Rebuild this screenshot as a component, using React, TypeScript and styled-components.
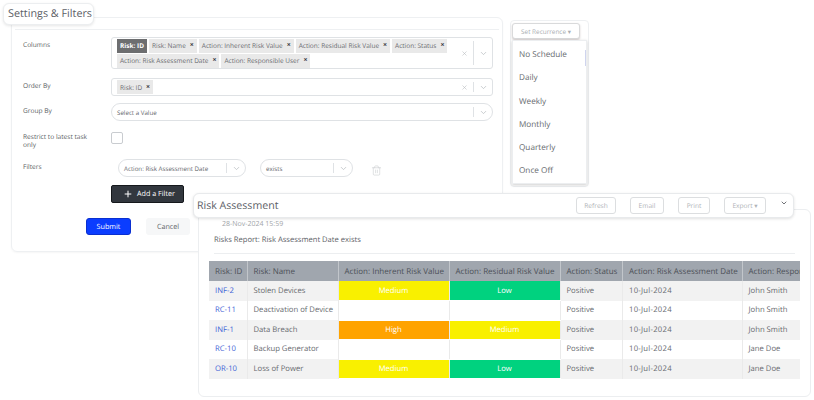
import React from 'react'
import styled, { createGlobalStyle } from 'styled-components'
import { ChevronDown, Plus, Trash2, X } from 'lucide-react'

const GlobalStyle = createGlobalStyle`
  html, body {
    margin: 0;
    width: 814px;
    height: 400px;
    overflow: hidden;
    background: #ffffff;
    font-family: "Open Sans", "Liberation Sans", sans-serif;
    color: #5c6066;
    text-rendering: geometricPrecision;
  }
  button {
    text-rendering: geometricPrecision;
  }
`

const Canvas = styled.div`
  position: relative;
  width: 814px;
  height: 400px;
  overflow: hidden;
`

const SettingsCard = styled.section`
  position: absolute;
  left: 11px;
  top: 17px;
  width: 492px;
  height: 235px;
  box-sizing: border-box;
  padding: 11px 3px 0;
  border: 1px solid #eef0f2;
  border-radius: 6px;
  box-shadow: 0 1px 2px rgba(0, 0, 0, 0.04);
`

const SettingsTitle = styled.h2`
  position: absolute;
  left: 3px;
  top: 3px;
  z-index: 1;
  margin: 0;
  height: 22px;
  width: 91px;
  box-sizing: border-box;
  padding-left: 4px;
  border: 1px solid #eceef0;
  border-radius: 6px;
  background: #fff;
  font-size: 10.8px;
  font-weight: 400;
  line-height: 20px;
  white-space: nowrap;
  color: #5c6066;
  box-shadow: 0 1px 3px rgba(0, 0, 0, 0.1);
`

const FormArea = styled.div`
  border-top: 1px solid #eef0f2;
  padding: 7px 6px 0 8px;
  display: flex;
  flex-direction: column;
`

const FormRow = styled.div<{ $height: number }>`
  display: grid;
  grid-template-columns: 88px 1fr;
  height: ${({ $height }) => $height}px;
`

const FieldLabel = styled.label<{ $tight?: boolean }>`
  font-size: 6.6px;
  font-weight: 400;
  line-height: 8px;
  padding-top: ${({ $tight }) => ($tight ? 1 : 4)}px;
  color: #5a5e63;
`

const SelectBox = styled.div<{ $round?: boolean; $width?: number; $height?: number }>`
  display: flex;
  align-items: center;
  box-sizing: border-box;
  width: ${({ $width }) => ($width ? `${$width}px` : '100%')};
  height: ${({ $height }) => $height ?? 18}px;
  border: 1px solid #dfe2e5;
  border-radius: ${({ $round }) => ($round ? '10px' : '3px')};
  padding: 1px 0 1px 5px;
  background: #fff;
`

const TagWrap = styled.div`
  flex: 1;
  display: flex;
  flex-wrap: wrap;
  gap: 1px 2px;
`

const Tag = styled.span<{ $active?: boolean }>`
  display: inline-flex;
  align-items: center;
  gap: 4px;
  height: 14px;
  padding: 0 3px;
  font-size: 6.5px;
  white-space: nowrap;
  font-weight: ${({ $active }) => ($active ? 700 : 400)};
  background: ${({ $active }) => ($active ? '#6d6e70' : '#e9e9e9')};
  color: ${({ $active }) => ($active ? '#ffffff' : '#696c70')};
`

const TagClose = styled.span`
  font-size: 7px;
  font-weight: 700;
  color: #33363a;
`

const Placeholder = styled.span`
  flex: 1;
  font-size: 6.2px;
  white-space: nowrap;
  color: #66696e;
`

const SelectActions = styled.div`
  display: flex;
  align-items: center;
  color: #b8bcc0;
`

const ActionDivider = styled.span<{ $tall?: boolean }>`
  display: block;
  width: 1px;
  height: ${({ $tall }) => ($tall ? 24 : 10)}px;
  margin: 0 5px;
  background: #dfe2e5;
`

const SelectChevron = styled(ChevronDown)`
  margin-right: 4px;
`

const CheckBox = styled.span`
  display: block;
  width: 12px;
  height: 12px;
  box-sizing: border-box;
  border: 1px solid #c9ccd0;
  border-radius: 2px;
`

const FilterRow = styled.div`
  display: flex;
  align-items: flex-start;
  gap: 14px;
  padding-left: 7px;
`

const TrashButton = styled.span`
  margin: 0 0 0 4px;
  color: #c6c9cc;
`

const AddButton = styled.button`
  display: flex;
  align-items: center;
  justify-content: center;
  gap: 4px;
  width: 73px;
  height: 18px;
  padding: 0 0 0 3px;
  border: 1px solid #15181c;
  border-radius: 2px;
  background: #32373e;
  color: #fff;
  font: 400 7.2px "Open Sans", sans-serif;
`

const FormFooter = styled.div`
  display: flex;
  gap: 15px;
  margin: 15px 0 0 63px;
`

const SubmitButton = styled.button`
  width: 45px;
  height: 17px;
  padding: 0;
  border: 1px solid #0a2fd0;
  border-radius: 3px;
  background: #0b3dff;
  color: #fff;
  font: 400 7.2px "Open Sans", sans-serif;
`

const CancelButton = styled.button`
  width: 44px;
  height: 17px;
  padding: 0;
  border: 0;
  border-radius: 3px;
  background: #f6f7f8;
  color: #63666b;
  font: 400 7.2px "Open Sans", sans-serif;
`

const RecurrencePanel = styled.aside`
  position: absolute;
  left: 510px;
  top: 20px;
  width: 79px;
  height: 167px;
  box-sizing: border-box;
  padding: 2px 1px 0 1px;
  border: 1px solid #eef0f2;
  border-radius: 4px;
`

const RecurrenceButton = styled.button`
  display: block;
  width: 68px;
  height: 16px;
  margin-bottom: 1px;
  padding: 0;
  border: 1px solid #d9dadb;
  border-radius: 3px;
  background: #fff;
  color: #a9adb1;
  font: 400 6.4px "Open Sans", sans-serif;
  box-shadow: 0 1px 2px rgba(80, 50, 50, 0.25);
`

const RecurrenceMenu = styled.ul`
  position: relative;
  list-style: none;
  margin: 0;
  padding: 2px 0 0;
  height: 144px;
  box-sizing: border-box;
  background: #fff;
  border: 1px solid #eceef0;
  box-shadow: 0 1px 3px rgba(0, 0, 0, 0.2);

  &::after {
    content: '';
    position: absolute;
    right: 0;
    top: 9px;
    width: 1px;
    height: 16px;
    background: #cfd4ee;
  }
`

const RecurrenceItem = styled.li`
  height: 23.3px;
  padding-left: 6px;
  font-size: 8.2px;
  line-height: 23.3px;
  color: #686b70;
`

const ReportCard = styled.section`
  position: absolute;
  left: 198px;
  top: 209px;
  width: 613px;
  height: 188px;
  box-sizing: border-box;
  padding: 9px 10px 0;
  background: #fff;
  border: 1px solid #eceef0;
  border-radius: 6px;
`

const ReportBar = styled.header`
  position: absolute;
  left: 193px;
  top: 193px;
  z-index: 1;
  width: 601px;
  height: 25px;
  box-sizing: border-box;
  display: flex;
  align-items: center;
  gap: 14px;
  padding: 0 5px 0 3px;
  background: #fff;
  border: 1px solid #e8eaec;
  border-radius: 6px;
  box-shadow: 0 1px 3px rgba(0, 0, 0, 0.12);
`

const ReportTitle = styled.h1`
  flex: 1;
  margin: 0;
  font-size: 10.6px;
  font-weight: 400;
  color: #5c6066;
`

const GhostButton = styled.button<{ $width: number }>`
  width: ${({ $width }) => $width}px;
  height: 17px;
  padding: 0;
  border: 1px solid #dcdee0;
  border-radius: 3px;
  background: #fff;
  color: #b0b3b7;
  font: 400 6.6px "Open Sans", sans-serif;
`

const BarChevron = styled.span`
  display: flex;
  margin-top: -6px;
  color: #4c4f54;
`

const ReportDate = styled.div`
  margin: 1px 0 0 13px;
  font-size: 7px;
  line-height: 10px;
  color: #a2a5a9;
`

const ReportSubtitle = styled.div`
  margin: 5px 0 0 5px;
  font-size: 7.6px;
  line-height: 11px;
  color: #5c6066;
`

const Rule = styled.hr`
  margin: 7px 5px 7px 5px;
  border: 0;
  border-top: 1px solid #eceef0;
`

const TableClip = styled.div`
  width: 591px;
  overflow: hidden;
`

const Table = styled.table`
  table-layout: fixed;
  width: 660px;
  border-collapse: collapse;
  font-size: 7.7px;
`

const Col = styled.col<{ $width: number }>`
  width: ${({ $width }) => $width}px;
`

const HeadCell = styled.th`
  height: 20px;
  padding: 0 0 0 6px;
  border-right: 1px solid #c2c6cb;
  background: #a0a6ae;
  color: #4c5057;
  font-size: 8px;
  font-weight: 500;
  text-align: left;
  white-space: nowrap;
  overflow: hidden;
`

const Row = styled.tr<{ $shaded: boolean }>`
  height: 19.5px;
  background: ${({ $shaded }) => ($shaded ? '#f2f2f2' : '#ffffff')};
`

const Cell = styled.td`
  padding: 0 0 0 6px;
  border-right: 1px solid #eaeaea;
  color: #686b70;
  white-space: nowrap;
  overflow: hidden;
`

const DateCell = styled(Cell)`
  letter-spacing: 0.25px;
`

const IdLink = styled.a`
  color: #3f63d6;
  text-decoration: none;
`

const levelColors: Record<string, string> = {
  Medium: '#f9f000',
  Low: '#00d27f',
  High: '#ffa300',
}

const LevelCell = styled.td<{ $level?: string }>`
  padding: 0;
  border-right: 1px solid #eaeaea;
  border-bottom: 1px solid #ffffff;
  background: ${({ $level }) => ($level ? levelColors[$level] : '#ffffff')};
  color: #ffffff;
  font-weight: 500;
  text-align: center;
`

const columns = [
  { label: 'Risk: ID', width: 38 },
  { label: 'Risk: Name', width: 91 },
  { label: 'Action: Inherent Risk Value', width: 111 },
  { label: 'Action: Residual Risk Value', width: 111 },
  { label: 'Action: Status', width: 62.5 },
  { label: 'Action: Risk Assessment Date', width: 119.5 },
  { label: 'Action: Responsible User', width: 127 },
]

const rows = [
  { id: 'INF-2', name: 'Stolen Devices', inherent: 'Medium', residual: 'Low', user: 'John Smith' },
  { id: 'RC-11', name: 'Deactivation of Device', inherent: '', residual: '', user: 'John Smith' },
  { id: 'INF-1', name: 'Data Breach', inherent: 'High', residual: 'Medium', user: 'John Smith' },
  { id: 'RC-10', name: 'Backup Generator', inherent: '', residual: '', user: 'Jane Doe' },
  { id: 'OR-10', name: 'Loss of Power', inherent: 'Medium', residual: 'Low', user: 'Jane Doe' },
]

const columnTags = [
  'Risk: Name',
  'Action: Inherent Risk Value',
  'Action: Residual Risk Value',
  'Action: Status',
  'Action: Risk Assessment Date',
  'Action: Responsible User',
]

const recurrences = ['No Schedule', 'Daily', 'Weekly', 'Monthly', 'Quarterly', 'Once Off']

const Actions = ({ clear, tall }: { clear?: boolean; tall?: boolean }) => (
  <SelectActions>
    {clear && <X size={7} />}
    <ActionDivider $tall={tall} />
    <SelectChevron size={9} />
  </SelectActions>
)

const App = () => (
  <Canvas>
    <GlobalStyle />
    <SettingsTitle>Settings &amp; Filters</SettingsTitle>
    <SettingsCard>
      <FormArea>
        <FormRow $height={41}>
          <FieldLabel>Columns</FieldLabel>
          <SelectBox $height={32}>
            <TagWrap>
              <Tag $active>Risk: ID</Tag>
              {columnTags.map((tag) => (
                <Tag key={tag}>
                  {tag} <TagClose>×</TagClose>
                </Tag>
              ))}
            </TagWrap>
            <Actions clear tall />
          </SelectBox>
        </FormRow>
        <FormRow $height={25}>
          <FieldLabel>Order By</FieldLabel>
          <SelectBox>
            <TagWrap>
              <Tag>
                Risk: ID <TagClose>×</TagClose>
              </Tag>
            </TagWrap>
            <Actions clear />
          </SelectBox>
        </FormRow>
        <FormRow $height={29}>
          <FieldLabel>Group By</FieldLabel>
          <SelectBox $round>
            <Placeholder>Select a Value</Placeholder>
            <Actions />
          </SelectBox>
        </FormRow>
        <FormRow $height={27}>
          <FieldLabel $tight>
            Restrict to latest task
            <br />
            only
          </FieldLabel>
          <CheckBox />
        </FormRow>
        <FormRow $height={26}>
          <FieldLabel>Filters</FieldLabel>
          <FilterRow>
            <SelectBox $round $width={128}>
              <Placeholder>Action: Risk Assessment Date</Placeholder>
              <Actions />
            </SelectBox>
            <SelectBox $round $width={93}>
              <Placeholder>exists</Placeholder>
              <Actions />
            </SelectBox>
            <TrashButton>
              <Trash2 size={11} strokeWidth={1.2} />
            </TrashButton>
          </FilterRow>
        </FormRow>
        <FormRow $height={18}>
          <span />
          <AddButton>
            <Plus size={10} strokeWidth={2.4} /> Add a Filter
          </AddButton>
        </FormRow>
        <FormFooter>
          <SubmitButton>Submit</SubmitButton>
          <CancelButton>Cancel</CancelButton>
        </FormFooter>
      </FormArea>
    </SettingsCard>

    <RecurrencePanel>
      <RecurrenceButton>Set Recurrence ▾</RecurrenceButton>
      <RecurrenceMenu>
        {recurrences.map((item) => (
          <RecurrenceItem key={item}>{item}</RecurrenceItem>
        ))}
      </RecurrenceMenu>
    </RecurrencePanel>

    <ReportCard>
      <ReportDate>28-Nov-2024 15:59</ReportDate>
      <ReportSubtitle>Risks Report: Risk Assessment Date exists</ReportSubtitle>
      <Rule />
      <TableClip>
        <Table>
          <colgroup>
            {columns.map((col) => (
              <Col key={col.label} $width={col.width} />
            ))}
          </colgroup>
          <thead>
            <tr>
              {columns.map((col) => (
                <HeadCell key={col.label}>{col.label}</HeadCell>
              ))}
            </tr>
          </thead>
          <tbody>
            {rows.map((row, i) => (
              <Row key={row.id} $shaded={i % 2 === 0}>
                <Cell>
                  <IdLink href="#">{row.id}</IdLink>
                </Cell>
                <Cell>{row.name}</Cell>
                <LevelCell $level={row.inherent}>{row.inherent}</LevelCell>
                <LevelCell $level={row.residual}>{row.residual}</LevelCell>
                <Cell>Positive</Cell>
                <DateCell>10-Jul-2024</DateCell>
                <Cell>{row.user}</Cell>
              </Row>
            ))}
          </tbody>
        </Table>
      </TableClip>
    </ReportCard>

    <ReportBar>
      <ReportTitle>Risk Assessment</ReportTitle>
      <GhostButton $width={40}>Refresh</GhostButton>
      <GhostButton $width={34}>Email</GhostButton>
      <GhostButton $width={32}>Print</GhostButton>
      <GhostButton $width={42}>Export ▾</GhostButton>
      <BarChevron>
        <ChevronDown size={8} strokeWidth={2.4} />
      </BarChevron>
    </ReportBar>
  </Canvas>
)

export default App
